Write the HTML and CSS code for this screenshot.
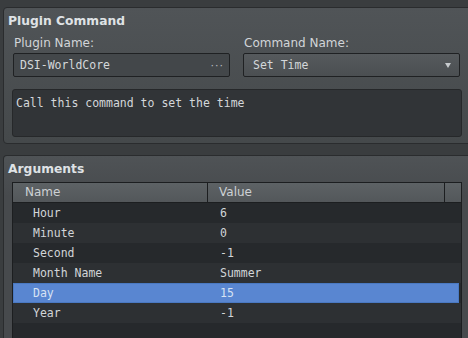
FILE: index.html
```html
<!DOCTYPE html>
<html>

<head>
	<title>Plugin Command</title>
	<meta charset='utf-8' />
	<link rel="stylesheet" href="styles.css">
</head>

<body>
	<div class="group first">
		<div class="title">Plugin Command</div>
		<div class="fields">
			<div class="field">
				<div class="label">Plugin Name:</div>
				<div class="input">
					<span>DSI-WorldCore</span>
					<span class="dots">···</span>
				</div>
			</div>
			<div class="field">
				<div class="label">Command Name:</div>
				<div class="select">
					<span>Set Time</span>
					<span class="arrow"></span>
				</div>
			</div>
		</div>
		<div class="desc">Call this command to set the time</div>
	</div>

	<div class="group second">
		<div class="title">Arguments</div>
		<div class="grid">
			<div class="head">
				<div class="cell">Name</div>
				<div class="cell">Value</div>
				<div class="cell corner"></div>
			</div>
			<div class="row"><div class="cell">Hour</div><div class="cell">6</div></div>
			<div class="row"><div class="cell">Minute</div><div class="cell">0</div></div>
			<div class="row"><div class="cell">Second</div><div class="cell">-1</div></div>
			<div class="row"><div class="cell">Month Name</div><div class="cell">Summer</div></div>
			<div class="row selected"><div class="cell">Day</div><div class="cell">15</div></div>
			<div class="row"><div class="cell">Year</div><div class="cell">-1</div></div>
			<div class="row"><div class="cell"></div><div class="cell"></div></div>
		</div>
	</div>
</body>

</html>
```

FILE: styles.css
```css
body {
	margin: 0;
	height: 338px;
	overflow: hidden;
	background: #3a3d3f;
	font-family: "DejaVu Sans", sans-serif;
	font-size: 12px;
	color: #d4d7da;
}

.group {
	margin: 7px -12px 0 3px;
	border: 1px solid #2a2c2e;
	border-radius: 4px;
	background: linear-gradient(#505457, #45494b);
	padding: 0 0 6px 0;
}

.group.second {
	margin-top: 11px;
	height: 182px;
	padding-bottom: 0;
	border-bottom: 0;
	border-radius: 4px 4px 0 0;
	overflow: hidden;
	background: linear-gradient(#4f5356, #474a4d 40px);
}

.title {
	font-weight: bold;
	font-size: 12.3px;
	line-height: 16px;
	margin: 5px 0 0 4px;
	color: #dfe2e5;
}

.fields {
	display: flex;
	gap: 13px;
	padding-left: 9px;
}

.field {
	width: 217px;
}

.label {
	line-height: 16px;
	margin: 6px 0 2px 1px;
	color: #d2d5d8;
}

.input,
.select {
	height: 22px;
	border: 1px solid #1f2123;
	border-radius: 2px;
	display: flex;
	align-items: center;
	justify-content: space-between;
	font-family: "DejaVu Sans Mono", monospace;
	font-size: 11.5px;
}

.input {
	background: #43474a;
	padding: 0 5px 0 6px;
}

.dots {
	font-family: "DejaVu Sans", sans-serif;
	font-size: 11px;
	color: #b9bdc1;
	letter-spacing: 1px;
}

.select {
	background: linear-gradient(#565a5d, #4b4f52);
	padding: 0 8px 0 9px;
}

.arrow {
	width: 0;
	height: 0;
	border-left: 3px solid transparent;
	border-right: 3px solid transparent;
	border-top: 5px solid #c6cacd;
}

.desc {
	margin: 12px 0 0 8px;
	width: 445px;
	height: 41px;
	border: 1px solid #26282a;
	border-radius: 3px;
	background: #313437;
	padding: 5px 0 0 3px;
	font-family: "DejaVu Sans Mono", monospace;
	font-size: 11.5px;
	line-height: 16px;
}

.grid {
	margin: 5px 0 0 8px;
	width: 448px;
	border: 1px solid #1c1e20;
	border-bottom: 0;
	background: #26292c;
}

.head,
.row {
	display: grid;
	grid-template-columns: 194px 1fr;
	height: 20px;
	align-items: center;
}

.head {
	grid-template-columns: 194px 237px 1fr;
	background: linear-gradient(#5d6265, #53575a);
	border-bottom: 1px solid #1c1e20;
	height: 19px;
	align-items: stretch;
}

.head .cell {
	padding-left: 12px;
	line-height: 19px;
	color: #cdd1d4;
}

.head .cell + .cell {
	border-left: 1px solid #1c1e20;
	padding-left: 11px;
}

.head .corner {
	padding: 0;
}

.row {
	font-family: "DejaVu Sans Mono", monospace;
	font-size: 11.5px;
	color: #d2d5d8;
	background: #26292c;
}

.row:nth-child(odd) {
	background: #2d3033;
}

.row .cell:first-child {
	padding-left: 20px;
}

.row .cell + .cell {
	padding-left: 13px;
}

.row.selected {
	background: #5986d1;
	box-shadow: inset 0 0 0 1px #4a79c2;
	margin-right: 2px;
	color: #d6e2f4;
}
```
